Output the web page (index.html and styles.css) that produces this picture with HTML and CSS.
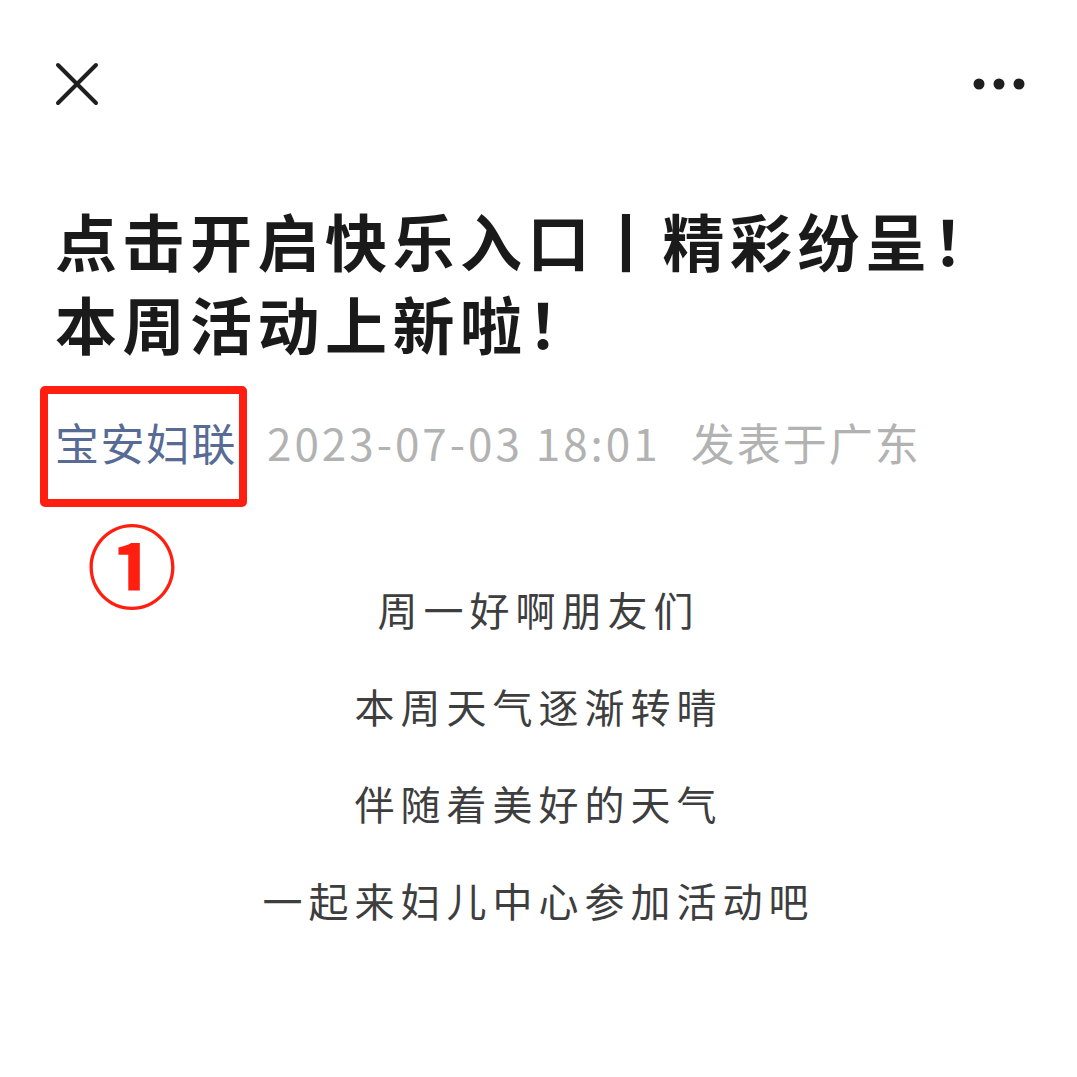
FILE: index.html
```html
<!DOCTYPE html>
<html lang="zh-CN">
  <head>
    <meta charset="UTF-8" />
    <meta name="viewport" content="width=device-width, initial-scale=1.0" />
    <title>点击开启快乐入口</title>
    <link rel="stylesheet" href="styles.css">
  </head>
  <body>
    <header class="top-bar">
      <button class="icon-btn" aria-label="关闭">
        <svg width="44" height="44" viewBox="0 0 44 44">
          <path d="M3 3 L41 41 M41 3 L3 41" stroke="#1f1f1f" stroke-width="4" stroke-linecap="round" fill="none" />
        </svg>
      </button>
      <button class="icon-btn" aria-label="更多">
        <svg width="60" height="14" viewBox="0 0 60 14">
          <circle cx="8" cy="7" r="5.5" fill="#1f1f1f" />
          <circle cx="28" cy="7" r="5.5" fill="#1f1f1f" />
          <circle cx="48" cy="7" r="5.5" fill="#1f1f1f" />
        </svg>
      </button>
    </header>

    <article class="article">
      <h1 class="title">点击开启快乐入口丨精彩纷呈！<br />本周活动上新啦！</h1>
      <div class="meta">
        <span class="author">宝安妇联<span class="mark-num">①</span></span>
        <span class="date">2023-07-03 18:01</span>
        <span class="place">发表于广东</span>
      </div>

      <div class="content">
        <p>周一好啊朋友们</p>
        <p>本周天气逐渐转晴</p>
        <p>伴随着美好的天气</p>
        <p>一起来妇儿中心参加活动吧</p>
      </div>
    </article>
  </body>
</html>
```

FILE: styles.css
```css
* {
  box-sizing: border-box;
  font-family: "Noto Sans CJK SC", "Noto Sans", sans-serif;
}
body {
  margin: 0;
  background-color: #ffffff;
  color: #1f1f1f;
}
.top-bar {
  display: flex;
  justify-content: space-between;
  align-items: center;
  padding: 61px 46px 0 55px;
  height: 106px;
}
.icon-btn {
  background: none;
  border: none;
  padding: 0;
  display: flex;
}
.article {
  padding: 0 10px 0 55px;
}
.title {
  margin: 93px 0 0;
  font-size: 62px;
  font-weight: 700;
  line-height: 83px;
  letter-spacing: 5.5px;
  color: #1a1a1a;
}
.meta {
  display: flex;
  align-items: center;
  gap: 30px;
  margin-top: 42px;
  font-size: 44px;
  font-weight: 400;
  line-height: 70px;
  color: #b2b2b2;
}
.author {
  position: relative;
  color: #576b95;
  letter-spacing: 1.5px;
}
.author::before {
  content: "";
  position: absolute;
  left: -15px;
  right: -10px;
  top: -21px;
  bottom: -30px;
  border: 8px solid #ff1f10;
  border-radius: 5px;
}
.mark-num {
  position: absolute;
  left: 32px;
  top: 110px;
  font-size: 90px;
  font-weight: 700;
  line-height: 1;
  color: #ff1f10;
  letter-spacing: 0;
}
.date {
  letter-spacing: 3px;
}
.place {
  letter-spacing: 2px;
}
.content {
  margin-top: 105px;
  margin-left: -55px;
  margin-right: -10px;
  text-align: center;
  font-size: 40px;
  font-weight: 400;
  line-height: 54px;
  letter-spacing: 6px;
  color: #3e3e3e;
}
.content p {
  margin: 0 0 43px;
}
```
